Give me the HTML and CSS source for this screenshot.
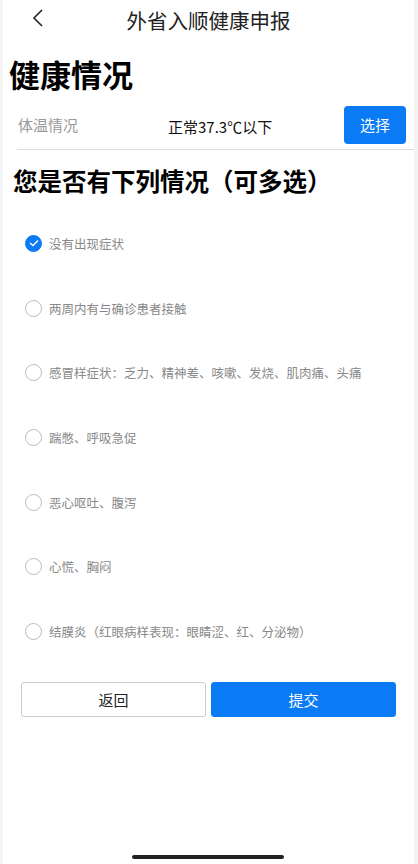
FILE: index.html
```html
<!DOCTYPE html>
<html lang="zh-CN">
<head>
    <meta charset="UTF-8">
    <meta name="viewport" content="width=device-width, initial-scale=1.0">
    <title>外省入顺健康申报</title>
    <link rel="stylesheet" href="styles.css">
</head>
<body>
    <div class="page">
        <div class="nav-bar">
            <button class="back-btn">
                <svg width="12" height="18" viewBox="0 0 12 18"><path d="M10 1 L2 9 L10 17" fill="none" stroke="#222" stroke-width="1.6"/></svg>
            </button>
            <div class="nav-title">外省入顺健康申报</div>
        </div>

        <h1 class="section-title">健康情况</h1>
        <div class="temp-row">
            <span class="temp-label">体温情况</span>
            <span class="temp-value">正常37.3℃以下</span>
            <button class="pick-btn">选择</button>
        </div>

        <h2 class="question">您是否有下列情况（可多选）</h2>
        <ul class="options">
            <li class="option checked"><span class="radio"><svg width="10" height="8" viewBox="0 0 10 8"><path d="M1 4 L4 6.5 L9 1.5" fill="none" stroke="#fff" stroke-width="1.4"/></svg></span>没有出现症状</li>
            <li class="option"><span class="radio"></span>两周内有与确诊患者接触</li>
            <li class="option"><span class="radio"></span>感冒样症状：乏力、精神差、咳嗽、发烧、肌肉痛、头痛</li>
            <li class="option"><span class="radio"></span>踹憋、呼吸急促</li>
            <li class="option"><span class="radio"></span>恶心呕吐、腹泻</li>
            <li class="option"><span class="radio"></span>心慌、胸闷</li>
            <li class="option"><span class="radio"></span>结膜炎（红眼病样表现：眼睛涩、红、分泌物）</li>
        </ul>

        <div class="actions">
            <button class="btn btn-back">返回</button>
            <button class="btn btn-submit">提交</button>
        </div>

        <div class="home-indicator"></div>
    </div>
</body>
</html>
```

FILE: styles.css
```css
* {
    box-sizing: border-box;
}

body {
    margin: 0;
    padding: 0;
    background: #fff;
    font-family: "Noto Sans CJK SC", "Noto Sans", sans-serif;
    color: #222;
}

.page {
    position: relative;
    width: 418px;
    height: 864px;
    margin: 0 auto;
    border-left: 3px solid #f4f4f4;
    border-right: 4px solid #f4f4f4;
    overflow: hidden;
}

.nav-bar {
    position: relative;
    height: 40px;
    display: flex;
    align-items: center;
    justify-content: center;
}

.back-btn {
    position: absolute;
    left: 27px;
    top: 9px;
    background: transparent;
    border: none;
    padding: 0;
    width: 16px;
    height: 20px;
}

.nav-title {
    font-size: 20.5px;
    color: #222;
    padding-left: 0;
}

.section-title {
    margin: 14px 0 0 6px;
    font-size: 31px;
    font-weight: 700;
    line-height: 40px;
    color: #000;
}

.temp-row {
    display: flex;
    align-items: center;
    height: 48px;
    margin: 8px 0 0 14px;
    padding-left: 1px;
    border-bottom: 1px solid #dcdcdc;
}

.temp-label {
    width: 150px;
    font-size: 15px;
    color: #999;
    margin-top: -3px;
}

.temp-value {
    flex: 1;
    font-size: 15px;
    color: #111;
    margin-top: 2px;
}

.pick-btn {
    width: 62px;
    height: 38px;
    margin: 0 8px 2px 0;
    border: none;
    border-radius: 4px;
    background: #0a7bf5;
    color: #fff;
    font-family: inherit;
    font-size: 15px;
}

.question {
    margin: 14px 0 0 10px;
    font-size: 24.5px;
    font-weight: 700;
    line-height: 34px;
    color: #000;
}

.options {
    list-style: none;
    margin: 13px 0 0 0;
    padding: 0 0 0 22px;
}

.option {
    display: flex;
    align-items: center;
    height: 64.7px;
    font-size: 12.5px;
    color: #888;
}

.radio {
    width: 17px;
    height: 17px;
    border-radius: 50%;
    border: 1px solid #bbb;
    margin-right: 7px;
    display: flex;
    align-items: center;
    justify-content: center;
    flex-shrink: 0;
}

.option.checked .radio {
    background: #0a7bf5;
    border-color: #0a7bf5;
}

.actions {
    display: flex;
    gap: 5px;
    padding: 0 18px 0 18px;
    margin-top: 18px;
}

.btn {
    flex: 1;
    height: 35px;
    border-radius: 3px;
    font-family: inherit;
    font-size: 15px;
}

.btn-back {
    background: #fff;
    border: 1px solid #ccc;
    color: #222;
}

.btn-submit {
    background: #0a7bf5;
    border: 1px solid #0a7bf5;
    color: #fff;
}

.home-indicator {
    position: absolute;
    left: 129px;
    bottom: 5px;
    width: 152px;
    height: 4px;
    border-radius: 2px;
    background: #222;
}
```
